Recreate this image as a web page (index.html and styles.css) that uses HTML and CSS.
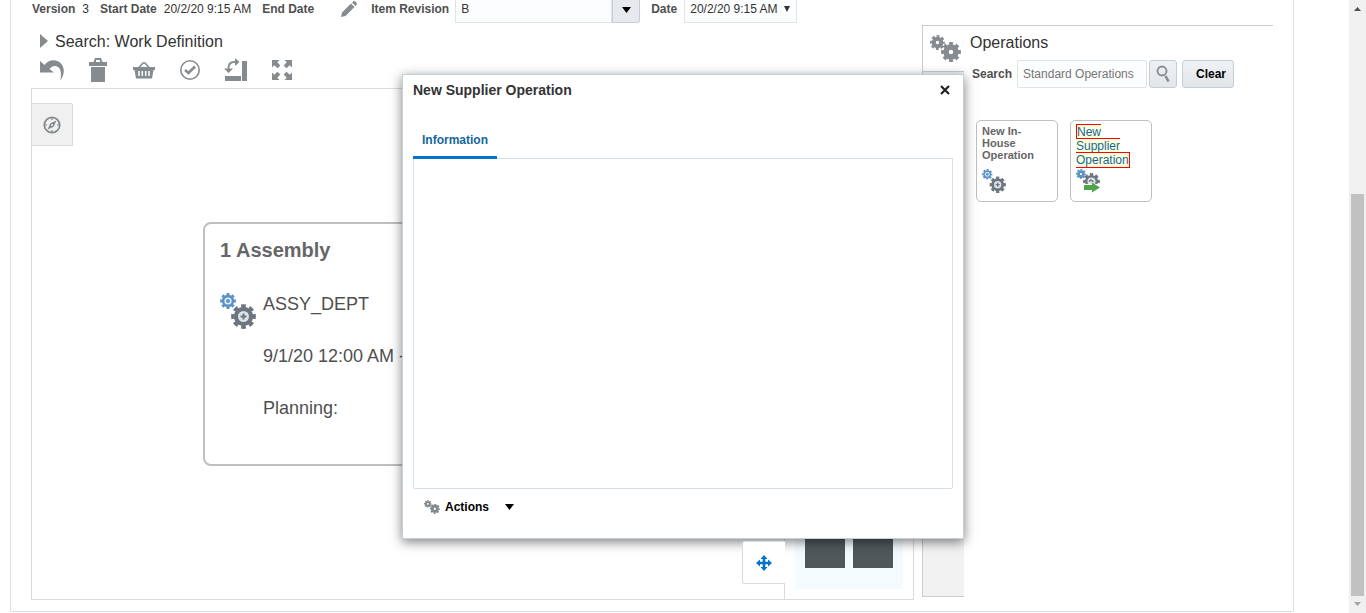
FILE: index.html
```html
<!DOCTYPE html>
<html lang="en">
<head>
<meta charset="utf-8">
<title>Work Definition</title>
<link rel="stylesheet" href="styles.css">
</head>
<body>
<svg class="defs" aria-hidden="true">
  <symbol id="gear" viewBox="0 0 20 20">
    <circle cx="10" cy="10" r="5" fill="none" stroke="currentColor" stroke-width="5.500"/>
    <circle cx="10" cy="10" r="8.400" fill="none" stroke="currentColor" stroke-width="3" pathLength="16" stroke-dasharray="1.150 0.850" stroke-dashoffset="0.575"/>
  </symbol>
  <symbol id="gears" viewBox="0 0 31 27">
    <use href="#gear" x="0" y="0" width="15" height="15"/>
    <use href="#gear" x="11" y="7" width="20" height="20"/>
  </symbol>
  <symbol id="operation" viewBox="0 0 36 36">
    <use href="#gear" x="0" y="0" width="16" height="16" color="#5d92c6"/>
    <circle cx="8" cy="8" r="3.600" fill="#e3eef8"/><circle cx="8" cy="8" r="2" fill="#5d92c6"/>
    <use href="#gear" x="11" y="11" width="25" height="25" color="#6c7680"/>
    <circle cx="23.500" cy="23.500" r="5.500" fill="#dfe2e5"/>
    <path d="M23.500 20.500v6M20.500 23.500h6" stroke="#6c7680" stroke-width="2"/>
  </symbol>
  <symbol id="down" viewBox="0 0 9 6"><path d="M0 0h9L4.500 6z" fill="currentColor"/></symbol>
</svg>

<main class="page">
  <div class="frame">
    <header class="meta">
      <dl class="facts">
        <div><dt>Version</dt><dd>3</dd></div>
        <div><dt>Start Date</dt><dd>20/2/20 9:15 AM</dd></div>
        <div><dt>End Date</dt><dd></dd></div>
      </dl>
      <button class="icon-button edit" aria-label="Edit">
        <svg width="16" height="16" viewBox="0 0 16 16" fill="#858b8e"><path d="M0 16l1-4.500L10 2.500l3.500 3.500L4.500 15zM11 1.500L12.500.3q.8-.6 1.500 0l1.700 1.700q.6.800 0 1.500L14.500 5z"/></svg>
      </button>
      <label class="caption" for="revision">Item Revision</label>
      <div class="combo">
        <input id="revision" type="text" value="B">
        <button aria-label="Show revisions"><svg width="9" height="6"><use href="#down"/></svg></button>
      </div>
      <label class="caption date-caption" for="date">Date</label>
      <div class="date">
        <select id="date"><option>20/2/20 9:15 AM</option></select>
        <svg width="6" height="6" viewBox="0 0 6 6"><path d="M0 0h6L3 6z" fill="#333"/></svg>
      </div>
    </header>

    <div class="workspace">
      <section class="editor">
        <h1 class="disclosure"><svg width="8" height="14" viewBox="0 0 8 14"><path d="M0 0l8 7-8 7z" fill="#858b8e"/></svg>Search: Work Definition</h1>
        <div class="toolbar" role="toolbar" aria-label="Work definition">
          <button class="icon-button" aria-label="Undo"><svg width="24" height="24" viewBox="0 0 24 24" fill="#858b8e"><path d="M0 3l4.500 4C8 1.500 16 .5 20.500 5c4.800 5 4 12-.2 17.500 1.200-6 1-12.500-3.300-14-3-1-5.500 0-7.500 2.500L14 14.500H0z"/></svg></button>
          <button class="icon-button" aria-label="Delete"><svg width="24" height="26" viewBox="0 0 24 26" fill="#858b8e"><path d="M3 5h4.500L9 1h6l1.500 4H21v4H3zM10 5h4V3h-4zM5 10h14v15H5z" fill-rule="evenodd"/></svg></button>
          <button class="icon-button" aria-label="Basket"><svg width="24" height="24" viewBox="0 0 24 24"><path d="M6.500 10l4.500-5h2l4.500 5" fill="none" stroke="#858b8e" stroke-width="1.600"/><path d="M1 9h22v3h-1.500L20 20.500H4L2.500 12H1z" fill="#858b8e"/><path d="M7 13v5M10.300 13v5M13.700 13v5M17 13v5" stroke="#fff" stroke-width="1.500"/></svg></button>
          <button class="icon-button" aria-label="Validate"><svg width="24" height="24" viewBox="0 0 24 24" fill="none" stroke="#858b8e"><circle cx="12" cy="12" r="9.200" stroke-width="1.600"/><path d="M7 12l3.500 3 6.500-6.500" stroke-width="2.600"/></svg></button>
          <button class="icon-button" aria-label="Rotate layout"><svg width="24" height="26" viewBox="0 0 24 26" fill="#858b8e"><path d="M1 19h16v5H1zM18 4h5v20h-5z"/><path d="M4.500 13V10.500Q5 5 10 5h2" fill="none" stroke="#858b8e" stroke-width="1.800"/><path d="M11 1l4.500 4L11 9zM0 11.500h9L4.500 16z"/></svg></button>
          <button class="icon-button" aria-label="Fit to screen"><svg width="24" height="24" viewBox="0 0 24 24" fill="#858b8e"><g id="corner"><path d="M2 2h7.500L7.300 4.300l3 3.200-2.800 2.800-3.200-3L2 9.500z"/></g><use href="#corner" transform="rotate(90 12 12)"/><use href="#corner" transform="rotate(180 12 12)"/><use href="#corner" transform="rotate(270 12 12)"/></svg></button>
        </div>

        <div class="canvas">
          <button class="compass" aria-label="Navigator"><svg width="18" height="18" viewBox="0 0 18 18"><circle cx="9" cy="9" r="7.700" fill="none" stroke="#858b8e" stroke-width="1.800"/><path d="M9 2v2M9 14v2M2 9h2M14 9h2" stroke="#858b8e" stroke-width="1.200"/><path d="M13.500 4.500l-2.800 6.200-6.200 2.800 2.800-6.200z" fill="#858b8e"/><circle cx="9" cy="9" r="1" fill="#f0f0f0"/></svg></button>
          <article class="node">
            <h2>1 Assembly</h2>
            <div class="node-body">
              <svg width="36" height="36"><use href="#operation"/></svg>
              <div class="node-lines"><p>ASSY_DEPT</p><p>9/1/20 12:00 AM - </p><p>Planning:</p></div>
            </div>
          </article>
          <div class="overview">
            <button class="pan" aria-label="Pan"><svg width="18" height="18" viewBox="0 0 18 18" fill="#0572ce"><path d="M9 1l3.500 4H10.300v2.700H13V5.500L17 9l-4 3.500v-2.200h-2.700V13h2.200L9 17l-3.500-4h2.200v-2.700H5v2.200L1 9l4-3.500v2.200h2.700V5H5.500z"/></svg></button>
            <div class="overview-frame"><div class="overview-map"><i></i><i></i></div></div>
          </div>
        </div>
      </section>

      <aside class="palette">
        <div class="tabs"><button aria-label="Operations"><svg width="31" height="27"><use href="#gears"/></svg></button></div>
        <div class="palette-body">
          <h2>Operations</h2>
          <form class="search">
            <label class="caption" for="find">Search</label>
            <input id="find" type="text" placeholder="Standard Operations">
            <button type="button" class="find" aria-label="Search"><svg width="14" height="18" viewBox="0 0 14 18" fill="none" stroke="#858b8e"><circle cx="6" cy="6" r="4.500" stroke-width="1.800"/><path d="M9.500 11l3 5.500" stroke-width="2.600"/></svg></button>
            <button type="button" class="clear">Clear</button>
          </form>
          <div class="cards">
            <article class="card"><h3>New In-House Operation</h3><svg width="24" height="24"><use href="#operation"/></svg></article>
            <article class="card"><p><a href="#new">New Supplier Operation</a></p>
              <svg width="24" height="24" viewBox="0 0 24 24"><use href="#gear" width="10" height="10" color="#5d92c6"/><use href="#gear" x="7" y="4" width="17" height="17" color="#6c7680"/><circle cx="15.500" cy="12.500" r="4" fill="#dfe2e5"/><path d="M13 12.500l2-1.500 2.500 2" fill="none" stroke="#6c7680" stroke-width="1.500"/><path d="M7 15h17v9H7z" fill="#fff"/><path d="M8 16h8v-2.500l8 5-8 5V21H8z" fill="#50a44b"/></svg></article>
          </div>
        </div>
      </aside>
    </div>
  </div>

  <section class="dialog" role="dialog" aria-labelledby="dialog-title">
    <header><h2 id="dialog-title">New Supplier Operation</h2>
      <button class="icon-button" aria-label="Close"><svg width="10" height="10" viewBox="0 0 10 10"><path d="M1 1l8 8M9 1L1 9" stroke="#222" stroke-width="2.200"/></svg></button></header>
    <div class="dialog-tabs" role="tablist"><button role="tab" aria-selected="true">Information</button></div>
    <div class="dialog-body" role="tabpanel"></div>
    <footer><button class="actions"><svg width="16" height="14"><use href="#gears"/></svg><span>Actions</span><svg width="9" height="6"><use href="#down"/></svg></button></footer>
  </section>
</main>

<div class="scrollbar" aria-hidden="true">
  <svg width="7" height="4" viewBox="0 0 7 4"><path d="M0 4h7L3.500 0z" fill="#505050"/></svg>
  <div class="thumb"></div>
  <svg width="7" height="4" viewBox="0 0 7 4"><path d="M0 0h7L3.500 4z" fill="#a3a3a3"/></svg>
</div>
</body>
</html>
```
FILE: styles.css
```css
* { box-sizing: border-box; }
body {
  display: flex;
  min-height: 100vh;
  margin: 0;
  background: #fff;
  color: #333;
  font: 12px/14px "Liberation Sans", Arial, sans-serif;
}
h1, h2, h3, p, dl, dd { margin: 0; }
button, input, select { font: inherit; color: inherit; border-radius: 0; }
button { padding: 0; border: 0; background: none; }
svg { display: block; flex: none; }
.defs { position: absolute; width: 0; height: 0; }

.page { position: relative; display: flex; flex: 1; min-width: 0; padding: 0 55px 1px 10px; }
.frame {
  display: flex;
  flex: 1;
  flex-direction: column;
  min-width: 0;
  padding: 0 20px 11px;
  border: 1px solid #d6dfe6;
  border-top: 0;
  border-radius: 0 0 2px 2px;
}

.meta { display: flex; height: 23px; padding: 0 0 5px 1px; align-items: center; }
.facts { display: flex; gap: 11px; }
.facts div { display: flex; gap: 7px; }
.facts dt, .caption { color: #4f4f4f; font-weight: bold; }
.icon-button { display: flex; align-items: center; justify-content: center; }
.edit { margin: 0 14px 0 20px; }
.combo { display: flex; width: 185px; height: 23px; margin: 0 11px 0 6px; align-self: flex-start; }
.combo input {
  flex: 1;
  min-width: 0;
  padding: 0 5px 4px;
  border: 1px solid #dfe4e7;
  border-top: 0;
  background: #fcfdfe;
}
.combo button {
  display: flex;
  width: 28px;
  padding-bottom: 3px;
  align-items: center;
  justify-content: center;
  border: 1px solid #c4ced7;
  border-top: 0;
  border-radius: 0 0 3px 0;
  background: #e6eaed;
  color: #000;
}
.date { position: relative; width: 113px; height: 23px; margin-left: 7px; align-self: flex-start; }
.date select {
  width: 100%;
  height: 100%;
  padding: 0 5px 4px;
  appearance: none;
  border: 1px solid #dfe4e7;
  border-top: 0;
  background: #fcfdfe;
}
.date svg { position: absolute; top: 6px; right: 7px; }

.workspace { display: flex; flex: 1; gap: 8px; padding-top: 2px; }
.editor { display: flex; flex: 1; flex-direction: column; min-width: 0; }
.disclosure { display: flex; gap: 7px; padding: 8px 9px 0; align-items: center; font-size: 16px; font-weight: normal; line-height: 18px; }
.disclosure svg { margin-bottom: 2px; }
.toolbar { display: flex; height: 37px; gap: 22px; padding-left: 9px; align-items: center; }
.toolbar .icon-button { width: 24px; }
.canvas { position: relative; flex: 1; border: 1px solid #d9dcde; }
.compass {
  position: absolute;
  top: 14px;
  left: 0;
  display: flex;
  width: 41px;
  height: 43px;
  align-items: center;
  justify-content: center;
  border: 1px solid #d9dcde;
  border-left: 0;
  border-radius: 0 2px 0 0;
  background: #f0f0f0;
}
.node {
  position: absolute;
  top: 133px;
  left: 171px;
  width: 420px;
  height: 244px;
  padding: 15px;
  border: 2px solid #bfbfbf;
  border-radius: 8px;
  color: #4f4f4f;
}
.node h2 { color: #666; font-size: 20px; line-height: 22px; }
.node-body { display: flex; gap: 7px; padding-top: 22px; }
.node-body svg { margin-top: 10px; }
.node-lines { font-size: 18px; line-height: 22px; }
.node-lines p { padding: 10px 0 20px; }
.overview { position: absolute; right: 0; bottom: 0; display: flex; }
.pan {
  display: flex;
  width: 43px;
  height: 43px;
  margin: 0 -1px 15px 0;
  align-self: flex-end;
  align-items: center;
  justify-content: center;
  border: 1px solid #d9dcde;
  border-right: 0;
  border-radius: 3px 0 0 3px;
  background: #fff;
  z-index: 1;
}
.overview-frame { padding: 10px; border-left: 1px solid #d9dcde; background: #fff; }
.overview-map { display: flex; gap: 8px; padding: 20px 10px 21px; background: #f4fbfe; }
.overview-map i { width: 40px; height: 40px; background: #50585a; }

.palette { display: flex; width: 351px; }
.tabs { width: 42px; margin-bottom: 3px; border: solid #ccc; border-width: 1px 0 1px 1px; background: #f2f2f2; }
.tabs button { display: flex; width: 100%; height: 46px; padding-left: 4px; align-items: center; justify-content: center; border-bottom: 1px solid #ccc; background: #fff; color: #858b8e; }
.palette-body { flex: 1; padding: 8px 0 0 6px; border-top: 1px solid #ccc; }
.palette-body h2 { font-size: 16px; font-weight: normal; line-height: 18px; }
.search { display: flex; padding: 8px 0 0 2px; align-items: center; }
.search input { width: 130px; height: 28px; margin: 0 2px 0 5px; padding: 0 5px; border: 1px solid #dfe4e7; border-radius: 2px; background: #fcfdfe; }
.search input::placeholder { color: #757575; }
.search button { display: flex; height: 28px; align-items: center; justify-content: center; border: 1px solid #c4ced7; border-radius: 3px; background: linear-gradient(#eff2f4, #e2e6e9); }
.find { width: 28px; margin-right: 5px; }
.search .clear { width: 52px; padding-left: 6px; color: #000; font-weight: bold; }
.cards { display: flex; gap: 12px; padding: 32px 0 0 6px; }
.card { width: 82px; height: 82px; padding: 4px 12px 4px 5px; border: 1px solid #bfbfbf; border-radius: 5px; }
.card h3 { color: #666; font-size: 11px; line-height: 12px; }
.card h3 + svg { margin-top: 8px; }
.card p { padding-bottom: 2px; }
.card a { border: 1px solid #f00; background: #ffffdc; color: #14679e; text-decoration: none; }

.dialog {
  position: absolute;
  top: 74px;
  left: 402px;
  width: 562px;
  padding: 7px 10px 20px;
  border: 1px solid #c4d0da;
  background: #fff;
  box-shadow: 0 3px 11px rgba(0, 0, 0, 0.5);
}
.dialog header { display: flex; padding-right: 3px; align-items: center; justify-content: space-between; }
.dialog h2 { font-size: 14px; line-height: 16px; }
.dialog-tabs { display: flex; padding-top: 33px; }
.dialog-tabs button { position: relative; height: 28px; padding: 0 9px 7px; border-bottom: 3px solid #0572ce; color: #14679e; font-weight: bold; }
.dialog-body { height: 331px; margin-top: -1px; border: 1px solid #d6dfe6; border-radius: 0 0 2px 2px; }
.actions { display: flex; height: 29px; padding: 6px 11px 0; align-items: center; color: #858b8e; }
.actions span { margin: 0 16px 0 5px; color: #000; font-weight: bold; }
.actions span + svg { color: #000; }

.scrollbar { display: flex; width: 17px; padding: 7px 2px; flex-direction: column; align-items: center; background: #f0f0f0; }
.thumb { flex: 1; width: 13px; margin: 183px 0 6px; background: #c1c1c1; }
```
